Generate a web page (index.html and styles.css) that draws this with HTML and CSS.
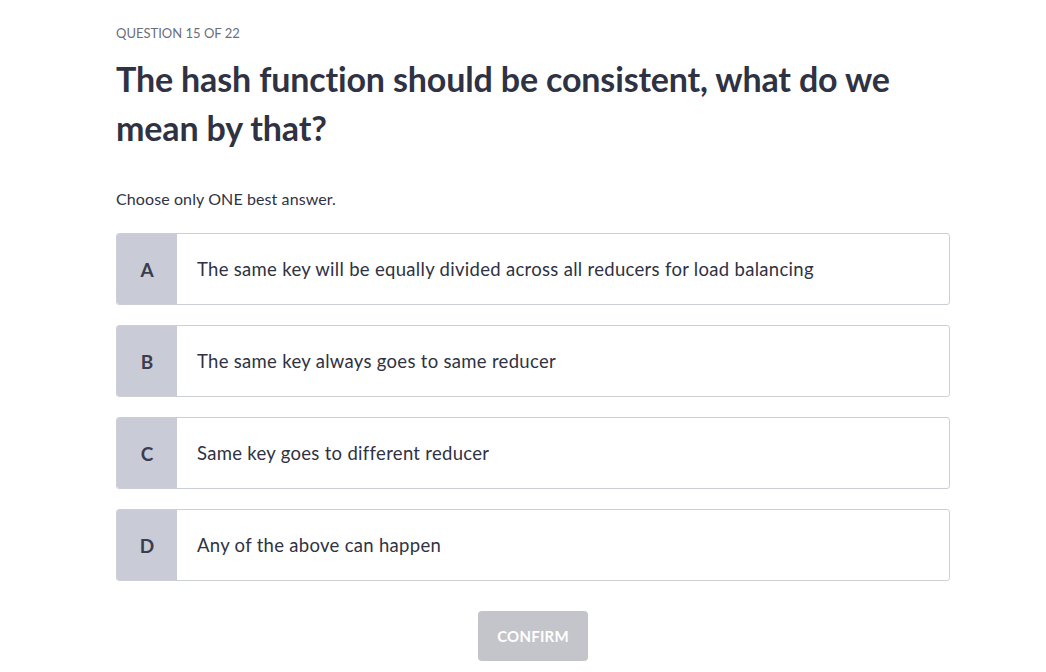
FILE: index.html
```html
<!DOCTYPE html>
<html lang="en">
<head>
<meta charset="utf-8">
<title>Question 15 of 22</title>
<link rel="stylesheet" href="styles.css">
</head>
<body>
<main class="page">
  <div class="counter">QUESTION 15 OF 22</div>
  <h1 class="question">The hash function should be consistent, what do we mean by that?</h1>
  <p class="hint">Choose only ONE best answer.</p>
  <div class="options">
    <div class="option"><div class="letter">A</div><div class="text">The same key will be equally divided across all reducers for load balancing</div></div>
    <div class="option"><div class="letter">B</div><div class="text">The same key always goes to same reducer</div></div>
    <div class="option"><div class="letter">C</div><div class="text">Same key goes to different reducer</div></div>
    <div class="option"><div class="letter">D</div><div class="text">Any of the above can happen</div></div>
  </div>
  <div class="actions"><button class="confirm" disabled>CONFIRM</button></div>
</main>
</body>
</html>
```
FILE: styles.css
```css
* { box-sizing: border-box; }
html, body { margin: 0; padding: 0; background: #ffffff; }
body { font-family: Lato, "Open Sans", sans-serif; color: #2f3243; }
.page { width: 834px; margin-left: 116px; padding-top: 24px; }
.counter { font-size: 13px; line-height: 18px; color: #6b6f7b; }
.question { margin: 12px 0 0; font-size: 34px; line-height: 49px; font-weight: 700; color: #2f3243; letter-spacing: -0.15px; }
.hint { margin: 36px 0 0; font-size: 16px; line-height: 22px; color: #2f3243; letter-spacing: 0.1px; }
.options { margin-top: 23px; display: flex; flex-direction: column; gap: 20px; }
.option { display: flex; height: 72px; border: 1px solid #cdcfd8; border-radius: 3px; overflow: hidden; background: #fff; }
.letter { width: 60px; flex: none; background: #c9ccd6; display: flex; align-items: center; justify-content: center; font-size: 19px; font-weight: 700; color: #3a3d50; }
.text { display: flex; align-items: center; padding-left: 20px; font-size: 18.5px; color: #2f3243; letter-spacing: 0.3px; }
.actions { margin-top: 30px; display: flex; justify-content: center; }
.confirm { width: 110px; height: 50px; border: 0; border-radius: 4px; background: #c4c5cb; color: #fff; font-family: Lato, "Open Sans", sans-serif; font-size: 15px; font-weight: 700; letter-spacing: 0.2px; padding: 0; }
```
